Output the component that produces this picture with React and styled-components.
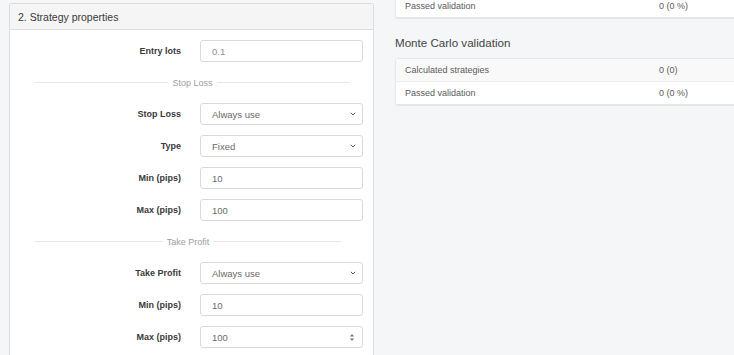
import React from "react";
import styled, { createGlobalStyle } from "styled-components";

const GlobalStyle = createGlobalStyle`
  html, body {
    margin: 0;
    padding: 0;
    background: #f4f6f8;
    overflow: hidden;
  }
  body {
    font-family: "Liberation Sans", Arial, sans-serif;
  }
`;

const Page = styled.div`
  display: flex;
  align-items: flex-start;
  gap: 21px;
  width: 734px;
  height: 355px;
  padding: 3px 0 0 9px;
  box-sizing: border-box;
  overflow: hidden;
`;

// Left panel ==============
const Panel = styled.section`
  flex: none;
  width: 365px;
  height: 400px;
  background: #fff;
  border: 1px solid #dcdcdc;
  border-radius: 3px 3px 0 0;
  box-sizing: border-box;
`;

const PanelHeading = styled.div`
  height: 25px;
  padding-left: 8px;
  display: flex;
  align-items: center;
  background: #f5f5f5;
  border-bottom: 1px solid #dcdcdc;
  border-radius: 3px 3px 0 0;
  font-size: 10.5px;
  color: #3a3a3a;
`;

const Form = styled.div`
  display: flex;
  flex-direction: column;
  gap: 10px;
  padding: 10px 10px 0 0;
`;

const Row = styled.div`
  display: grid;
  grid-template-columns: 171px 163px;
  column-gap: 19px;
  align-items: center;
`;

const Label = styled.label`
  text-align: right;
  font-size: 9px;
  font-weight: bold;
  color: #3a3a3a;
`;

const Field = styled.div`
  height: 22px;
  box-sizing: border-box;
  border: 1px solid #d9d9d9;
  border-radius: 3px;
  padding: 0 6px 0 11px;
  display: flex;
  align-items: center;
  justify-content: space-between;
  font-size: 9.5px;
  color: ${({ $muted }) => ($muted ? "#8c8c8c" : "#6a6a6a")};
  background: #fff;
`;

const Divider = styled.div`
  height: 21px;
  margin: 0 ${({ $right }) => $right}px 0 25px;
  display: flex;
  align-items: center;
  gap: 4px;
  font-size: 9px;
  color: #9d9d9d;

  &::before,
  &::after {
    content: "";
    flex: 1;
    height: 1px;
    background: #e6e6e6;
  }
`;

const Chevron = () => (
  <svg width="6" height="4" viewBox="0 0 6 4">
    <path d="M0.8 0.8 L3 3 L5.2 0.8" fill="none" stroke="#555" strokeWidth="1" />
  </svg>
);

const Spinner = () => (
  <svg width="6" height="9" viewBox="0 0 6 9" style={{ marginRight: 1 }}>
    <path d="M0.8 3.6 L3 1 L5.2 3.6 Z" fill="#777" />
    <path d="M0.8 5.4 L3 8 L5.2 5.4 Z" fill="#777" />
  </svg>
);

// Right column ==============
const Side = styled.div`
  flex: none;
  width: 380px;
  margin-top: -9px;
`;

const Card = styled.div`
  background: #fff;
  border: 1px solid #e6e6e6;
  border-radius: 3px;
  box-shadow: 0 1px 1px rgba(0, 0, 0, 0.07);
`;

const StatRow = styled.div`
  height: 22px;
  display: grid;
  grid-template-columns: 254px 1fr;
  align-items: center;
  padding-left: 9px;
  font-size: 9px;
  color: #5a5a5a;
  background: ${({ $striped }) => ($striped ? "#f9f9f9" : "#fff")};

  & + & {
    border-top: 1px solid #eee;
  }
`;

const SectionTitle = styled.h3`
  margin: 17px 0 7px;
  line-height: 16px;
  font-size: 11.6px;
  font-weight: normal;
  color: #444;
`;

const stopLossFields = [
  { label: "Stop Loss", value: "Always use", select: true },
  { label: "Type", value: "Fixed", select: true },
  { label: "Min (pips)", value: "10" },
  { label: "Max (pips)", value: "100" },
];

const takeProfitFields = [
  { label: "Take Profit", value: "Always use", select: true },
  { label: "Min (pips)", value: "10" },
  { label: "Max (pips)", value: "100", spin: true },
];

function FormRow({ label, value, select, spin, muted }) {
  return (
    <Row>
      <Label>{label}</Label>
      <Field $muted={muted}>
        <span>{value}</span>
        {select && <Chevron />}
        {spin && <Spinner />}
      </Field>
    </Row>
  );
}

export default function App() {
  return (
    <>
      <GlobalStyle />
      <Page>
        <Panel>
          <PanelHeading>2. Strategy properties</PanelHeading>
          <Form>
            <FormRow label="Entry lots" value="0.1" muted />
            <Divider $right={13}>Stop Loss</Divider>
            {stopLossFields.map((f, i) => (
              <FormRow key={i} {...f} />
            ))}
            <Divider $right={22}>Take Profit</Divider>
            {takeProfitFields.map((f, i) => (
              <FormRow key={i} {...f} />
            ))}
          </Form>
        </Panel>

        <Side>
          <Card>
            <StatRow>
              <span>Passed validation</span>
              <span>0 (0 %)</span>
            </StatRow>
          </Card>
          <SectionTitle>Monte Carlo validation</SectionTitle>
          <Card>
            <StatRow $striped>
              <span>Calculated strategies</span>
              <span>0 (0)</span>
            </StatRow>
            <StatRow>
              <span>Passed validation</span>
              <span>0 (0 %)</span>
            </StatRow>
          </Card>
        </Side>
      </Page>
    </>
  );
}
